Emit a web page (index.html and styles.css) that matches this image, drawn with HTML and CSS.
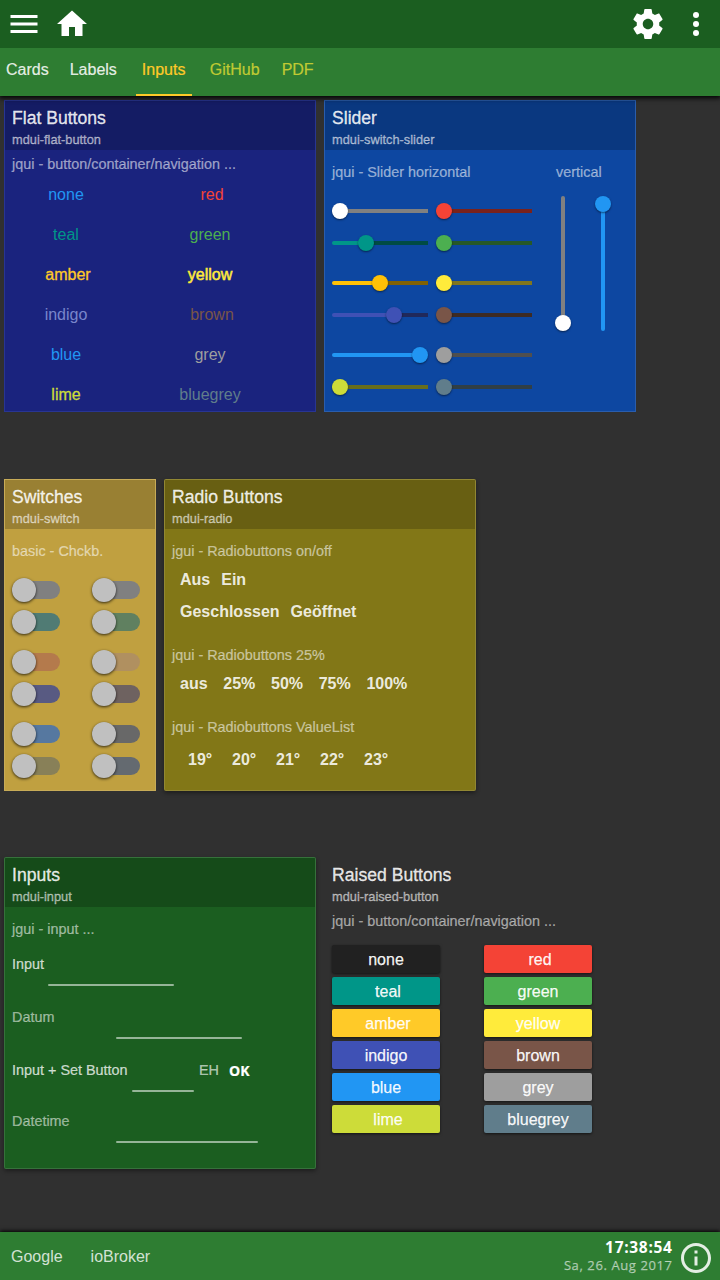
FILE: index.html
```html
<!DOCTYPE html>
<html lang="de">
<head>
<meta charset="utf-8">
<title>Inputs</title>
<link rel="stylesheet" href="styles.css">
</head>
<body>
<header class="top">
  <div class="toolbar">
    <svg class="icon" viewBox="0 0 24 24"><path d="M3 18h18v-2H3v2zm0-5h18v-2H3v2zm0-7v2h18V6H3z"/></svg>
    <svg class="icon" viewBox="0 0 24 24"><path d="M10 20v-6h4v6h5v-8h3L12 3 2 12h3v8z"/></svg>
    <span class="spacer"></span>
    <svg class="icon" viewBox="0 0 24 24"><path d="M19.43 12.98c.04-.32.07-.64.07-.98s-.03-.66-.07-.98l2.11-1.65c.19-.15.24-.42.12-.64l-2-3.46c-.12-.22-.39-.3-.61-.22l-2.49 1c-.52-.4-1.08-.73-1.69-.98l-.38-2.65C14.46 2.18 14.25 2 14 2h-4c-.25 0-.46.18-.49.42l-.38 2.65c-.61.25-1.17.59-1.69.98l-2.49-1c-.23-.09-.49 0-.61.22l-2 3.46c-.13.22-.07.49.12.64l2.11 1.65c-.04.32-.07.65-.07.98s.03.66.07.98l-2.11 1.65c-.19.15-.24.42-.12.64l2 3.46c.12.22.39.3.61.22l2.49-1c.52.4 1.08.73 1.69.98l.38 2.65c.03.24.24.42.49.42h4c.25 0 .46-.18.49-.42l.38-2.65c.61-.25 1.17-.59 1.69-.98l2.49 1c.23.09.49 0 .61-.22l2-3.46c.12-.22.07-.49-.12-.64l-2.11-1.65zM12 15.5c-1.93 0-3.5-1.57-3.5-3.5s1.57-3.5 3.5-3.5 3.500 1.570 3.500 3.500-1.570 3.500-3.500 3.500z"/></svg>
    <svg class="icon" viewBox="0 0 24 24"><circle cx="12" cy="6" r="2"/><circle cx="12" cy="12" r="2"/><circle cx="12" cy="18" r="2"/></svg>
  </div>
  <nav class="tabs">
    <a class="tab">Cards</a><a class="tab">Labels</a><a class="tab active">Inputs</a><a class="tab link">GitHub</a><a class="tab link">PDF</a>
  </nav>
</header>

<main class="board">
  <div class="row">
    <section class="card indigo-card">
      <div class="head"><h2>Flat Buttons</h2><p>mdui-flat-button</p></div>
      <p class="label tight">jqui - button/container/navigation ...</p>
      <div class="flat-grid">
        <span class="flat c-blue">none</span><span class="flat c-red nudge">red</span>
        <span class="flat c-teal">teal</span><span class="flat c-green">green</span>
        <span class="flat c-amber strong nudge">amber</span><span class="flat c-yellow stronger">yellow</span>
        <span class="flat c-indigo">indigo</span><span class="flat c-brown nudge">brown</span>
        <span class="flat c-blue">blue</span><span class="flat c-grey">grey</span>
        <span class="flat c-lime strong">lime</span><span class="flat c-bluegrey">bluegrey</span>
      </div>
    </section>

    <section class="card blue-card">
      <div class="head"><h2>Slider</h2><p>mdui-switch-slider</p></div>
      <div class="slider-body">
        <div class="slider-col">
          <p class="label">jqui - Slider horizontal</p>
          <div class="slider-grid">
            <div class="slider white"><i class="fill" style="width:8px"></i><i class="knob"></i><i class="rest"></i></div>
            <div class="slider red"><i class="fill" style="width:8px"></i><i class="knob"></i><i class="rest"></i></div>
            <div class="slider teal"><i class="fill" style="width:34px"></i><i class="knob"></i><i class="rest"></i></div>
            <div class="slider green"><i class="fill" style="width:8px"></i><i class="knob"></i><i class="rest"></i></div>
            <div class="slider amber"><i class="fill" style="width:48px"></i><i class="knob"></i><i class="rest"></i></div>
            <div class="slider yellow"><i class="fill" style="width:8px"></i><i class="knob"></i><i class="rest"></i></div>
            <div class="slider indigo"><i class="fill" style="width:62px"></i><i class="knob"></i><i class="rest"></i></div>
            <div class="slider brown"><i class="fill" style="width:8px"></i><i class="knob"></i><i class="rest"></i></div>
            <div class="slider blue"><i class="fill" style="width:88px"></i><i class="knob"></i><i class="rest"></i></div>
            <div class="slider grey"><i class="fill" style="width:8px"></i><i class="knob"></i><i class="rest"></i></div>
            <div class="slider lime"><i class="fill" style="width:8px"></i><i class="knob"></i><i class="rest"></i></div>
            <div class="slider bluegrey"><i class="fill" style="width:8px"></i><i class="knob"></i><i class="rest"></i></div>
          </div>
        </div>
        <div class="vertical-col">
          <p class="label">vertical</p>
          <div class="verticals">
            <div class="vslider white"><i class="vrest"></i><i class="knob"></i></div>
            <div class="vslider blue"><i class="knob"></i><i class="vfill"></i></div>
          </div>
        </div>
      </div>
    </section>
  </div>

  <div class="row">
    <section class="card amber-card narrow">
      <div class="head"><h2>Switches</h2><p>mdui-switch</p></div>
      <p class="label">basic - Chckb.</p>
      <div class="switch-grid">
        <i class="switch s-none"></i><i class="switch s-none"></i>
        <i class="switch s-teal"></i><i class="switch s-green"></i>
        <i class="switch s-red"></i><i class="switch s-yellow"></i>
        <i class="switch s-indigo"></i><i class="switch s-brown"></i>
        <i class="switch s-blue"></i><i class="switch s-grey"></i>
        <i class="switch s-lime"></i><i class="switch s-bluegrey"></i>
      </div>
    </section>

    <section class="card olive-card raised-card">
      <div class="head"><h2>Radio Buttons</h2><p>mdui-radio</p></div>
      <p class="label">jgui - Radiobuttons on/off</p>
      <div class="radios two"><b>Aus</b><b>Ein</b></div>
      <div class="radios two"><b>Geschlossen</b><b>Geöffnet</b></div>
      <p class="label second">jqui - Radiobuttons 25%</p>
      <div class="radios five"><b>aus</b><b>25%</b><b>50%</b><b>75%</b><b>100%</b></div>
      <p class="label third">jqui - Radiobuttons ValueList</p>
      <div class="radios values"><b>19°</b><b>20°</b><b>21°</b><b>22°</b><b>23°</b></div>
    </section>
  </div>

  <div class="row">
    <section class="card green-card raised-card">
      <div class="head"><h2>Inputs</h2><p>mdui-input</p></div>
      <p class="label">jgui - input ...</p>
      <div class="field f-input"><span class="bright">Input</span><i class="line"></i></div>
      <div class="field f-date"><span>Datum</span><i class="line"></i></div>
      <div class="field f-set"><span class="bright">Input + Set Button</span><i class="line"></i><span class="unit">EH</span><b class="ok">OK</b></div>
      <div class="field f-datetime"><span>Datetime</span><i class="line"></i></div>
    </section>

    <section class="card plain-card">
      <div class="head"><h2>Raised Buttons</h2><p>mdui-raised-button</p></div>
      <p class="label tight">jqui - button/container/navigation ...</p>
      <div class="raised-grid">
        <span class="btn b-none">none</span><span class="btn b-red nudge">red</span>
        <span class="btn b-teal nudge">teal</span><span class="btn b-green">green</span>
        <span class="btn b-amber nudge">amber</span><span class="btn b-yellow">yellow</span>
        <span class="btn b-indigo">indigo</span><span class="btn b-brown">brown</span>
        <span class="btn b-blue">blue</span><span class="btn b-grey">grey</span>
        <span class="btn b-lime nudge">lime</span><span class="btn b-bluegrey">bluegrey</span>
      </div>
    </section>
  </div>
</main>

<footer class="bottom">
  <a>Google</a><a>ioBroker</a>
  <span class="spacer"></span>
  <div class="clock"><b>17:38:54</b><span>Sa, 26. Aug 2017</span></div>
  <svg class="info" viewBox="0 0 36 36"><path d="M16.500 25.500h3v-9h-3v9zM16.500 13.500h3v-3h-3v3zM18 3C9.720 3 3 9.720 3 18s6.720 15 15 15 15-6.720 15-15S26.280 3 18 3zm0 27c-6.615 0-12-5.385-12-12S11.385 6 18 6s12 5.385 12 12-5.385 12-12 12z"/></svg>
</footer>
</body>
</html>
```
FILE: styles.css
```css
* { box-sizing: border-box; margin: 0; padding: 0; }
body {
  width: 720px; height: 1280px; overflow: hidden;
  display: flex; flex-direction: column;
  background: #303030; color: #fff;
  font: 16px/24px "Liberation Sans", Arial, sans-serif;
}
i { display: block; font-style: normal; }
.spacer { flex: 1; }

/* header */
.top { flex: none; height: 96px; box-shadow: 0 1px 5px 1px #000; z-index: 1; }
.toolbar { display: flex; height: 48px; background: #1b5e20; }
.icon { width: 36px; height: 36px; margin: 6px; fill: #fff; }
.tabs { display: flex; height: 48px; background: #2e7d32; }
.tab { height: 48px; padding: 10px 6px 0; color: rgba(255,255,255,.87); margin-right: 9px; -webkit-text-stroke: .2px; }
.tab + .tab { margin-right: 13px; }
.tab.active { width: 56px; color: #ffca28; border-bottom: 2px solid #ffca28; margin-right: 12px; }
.tab.link { color: #c0ca33; margin-right: 10px; }

/* cards */
.board { flex: 1; padding: 4px 4px 0; }
.row { display: flex; gap: 8px; height: 312px; }
.row + .row { margin-top: 67px; }
.row:last-child { margin-top: 66px; }
.card { width: 312px; height: 312px; border: 1px solid rgba(255,255,255,.12); }
.narrow { width: 152px; }
.raised-card { box-shadow: 0 2px 4px rgba(0,0,0,.4); border-radius: 2px; }
.indigo-card { background-color: #1a237e; border-color: #283593; }
.blue-card { background-color: #0d47a1; }
.amber-card { background-color: #c0a040; }
.olive-card { background-color: #827717; }
.green-card { background-color: #1b5e20; }
.plain-card { border-color: transparent; }
.head { height: 49px; padding: 6px 7px 0; background: rgba(0,0,0,.2); }
.plain-card .head { background: none; }
.head h2 { font-size: 17.6px; font-weight: 400; line-height: 22px; color: rgba(255,255,255,.87); -webkit-text-stroke: .3px; }
.head p { font-size: 12.8px; line-height: 22px; color: rgba(255,255,255,.54); -webkit-text-stroke: .35px; }
.label { font-size: 14.4px; line-height: 20px; padding: 12px 0 0 7px; color: rgba(255,255,255,.54); white-space: nowrap; -webkit-text-stroke: .2px; }
.label.tight { padding-top: 4px; }

/* flat buttons */
.flat-grid { display: grid; grid-template-columns: 144px 144px; grid-auto-rows: 40px; margin: 1px 0 0 -11px; }
.flat { text-align: center; line-height: 40px; }
.nudge { padding-left: 4px; }
.strong { -webkit-text-stroke: .3px; }
.stronger { -webkit-text-stroke: .5px; }
.c-blue { color: #2196f3; } .c-red { color: #f44336; } .c-teal { color: #009688; }
.c-green { color: #4caf50; } .c-amber { color: #ffca28; } .c-yellow { color: #ffeb3b; }
.c-indigo { color: #7986cb; } .c-brown { color: #795548; } .c-grey { color: #9e9e9e; }
.c-lime { color: #cddc39; } .c-bluegrey { color: #607d8b; }

/* sliders */
.slider-body { display: flex; gap: 24px; }
.slider-col { width: 207px; }
.slider-grid { display: grid; grid-template-columns: 96px 96px; grid-template-rows: 32px 40px 32px 40px 32px 16px; gap: 0 8px; margin: 21px 0 0 7px; }
.slider { display: flex; align-items: center; height: 16px; }
.fill { height: 4px; background: var(--c); border-radius: 2px 0 0 2px; }
.knob { flex: none; width: 16px; height: 16px; margin: 0 -8px; border-radius: 50%; background: var(--c); box-shadow: 0 1px 2px rgba(0,0,0,.5); z-index: 1; }
.rest { flex: 1; height: 4px; background: var(--t); }
.white { --c: #fff; --t: #808080; } .red { --c: #f44336; --t: #7a221b; }
.teal { --c: #009688; --t: #004b44; } .green { --c: #4caf50; --t: #265828; }
.amber { --c: #ffc107; --t: #806104; } .yellow { --c: #ffeb3b; --t: #80761e; }
.indigo { --c: #3f51b5; --t: #20295b; } .brown { --c: #795548; --t: #3d2b24; }
.blue { --c: #2196f3; --t: #114b7a; } .grey { --c: #9e9e9e; --t: #4f4f4f; }
.lime { --c: #cddc39; --t: #676e1d; } .bluegrey { --c: #607d8b; --t: #303f46; }
.vertical-col .label { padding-left: 0; }
.verticals { display: flex; gap: 24px; margin: 14px 0 0 -1px; }
.vslider { display: flex; flex-direction: column; align-items: center; width: 16px; height: 135px; }
.vslider .knob { margin: 0; }
.vrest, .vfill { flex: 1; width: 4px; }
.vrest { background: var(--t); border-radius: 2px 2px 0 0; margin-bottom: -8px; }
.vfill { background: var(--c); border-radius: 0 0 2px 2px; margin-top: -8px; }

/* switches */
.switch-grid { display: grid; grid-template-columns: 48px 48px; gap: 0 32px; grid-template-rows: 32px 40px 32px 40px 32px 24px; margin: 17px 0 0 7px; }
.switch { display: flex; align-items: center; height: 18px; margin-top: 3px; border-radius: 9px; background: var(--s); }
.switch::before { content: ""; width: 24px; height: 24px; border-radius: 50%; background: #c0c0c0; box-shadow: 0 1px 3px rgba(0,0,0,.75); }
.s-none { --s: #808080; } .s-teal { --s: #507b74; } .s-green { --s: #608060; }
.s-red { --s: #b47a4c; } .s-yellow { --s: #b09060; } .s-indigo { --s: #585a82; }
.s-brown { --s: #6e6260; } .s-blue { --s: #5678a0; } .s-grey { --s: #686868; }
.s-lime { --s: #888058; } .s-bluegrey { --s: #646a70; }

/* radio buttons */
.radios { display: flex; height: 32px; line-height: 34px; padding-left: 15px; color: rgba(255,255,255,.87); }
.two { gap: 11px; }
.label + .two { margin-top: 2px; }
.five { gap: 15.7px; margin-top: 2px; }
.values { padding-left: 23px; margin-top: 6px; }
.values b { width: 44px; }
.label.second { padding-top: 18px; }
.label.third { padding-top: 18px; }

/* inputs */
.field { display: flex; height: 53px; padding-left: 7px; font-size: 14.4px; line-height: 20px; color: rgba(255,255,255,.54); -webkit-text-stroke: .2px; }
.f-input { margin-top: 15px; }
.f-set { height: 51px; }
.bright { color: rgba(255,255,255,.75); }
.line { height: 2px; background: rgba(255,255,255,.54); margin-top: 30px; border-radius: 1px; }
.f-input span { width: 36px; } .f-input .line { width: 126px; }
.f-date span, .f-datetime span { width: 104px; }
.f-date .line { width: 126px; }
.f-datetime .line { width: 142px; }
.f-set .bright { width: 120px; } .f-set .line { width: 62px; }
.unit { width: 35px; padding-left: 5px; color: rgba(255,255,255,.65); }
.ok { font-family: "Open Sans", sans-serif; font-size: 14px; line-height: 21px; color: #fff; }

/* raised buttons */
.raised-grid { display: grid; grid-template-columns: 108px 108px; gap: 4px 44px; grid-auto-rows: 28px; margin: 14px 0 0 7px; }
.btn { text-align: center; line-height: 30px; height: 28px; border-radius: 2px; box-shadow: 0 1px 3px rgba(0,0,0,.6); color: rgba(255,255,255,.95); -webkit-text-stroke: .25px; }
.b-none { background: #212121; } .b-red { background: #f44336; } .b-teal { background: #009688; }
.b-green { background: #4caf50; } .b-amber { background: #ffca28; } .b-yellow { background: #ffeb3b; }
.b-indigo { background: #3f51b5; } .b-brown { background: #795548; } .b-blue { background: #2196f3; }
.b-grey { background: #9e9e9e; } .b-lime { background: #cddc39; } .b-bluegrey { background: #607d8b; }

/* footer */
.bottom { flex: none; display: flex; height: 48px; padding: 0 6px 0 11px; background: #2e7d32; box-shadow: 0 -1px 4px #000; }
.bottom a { line-height: 50px; margin-right: 28px; color: rgba(255,255,255,.8); }
.clock { display: flex; flex-direction: column; align-items: flex-end; padding-top: 6px; margin-right: 6px; font-family: "Open Sans", sans-serif; line-height: 18px; }
.clock b { font-size: 15.5px; letter-spacing: .7px; margin-right: -.7px; }
.clock span { font-size: 13px; letter-spacing: .6px; margin-right: -.6px; color: rgba(255,255,255,.54); -webkit-text-stroke: .25px; }
.info { width: 36px; height: 36px; margin-top: 8px; fill: rgba(255,255,255,.87); }
```
